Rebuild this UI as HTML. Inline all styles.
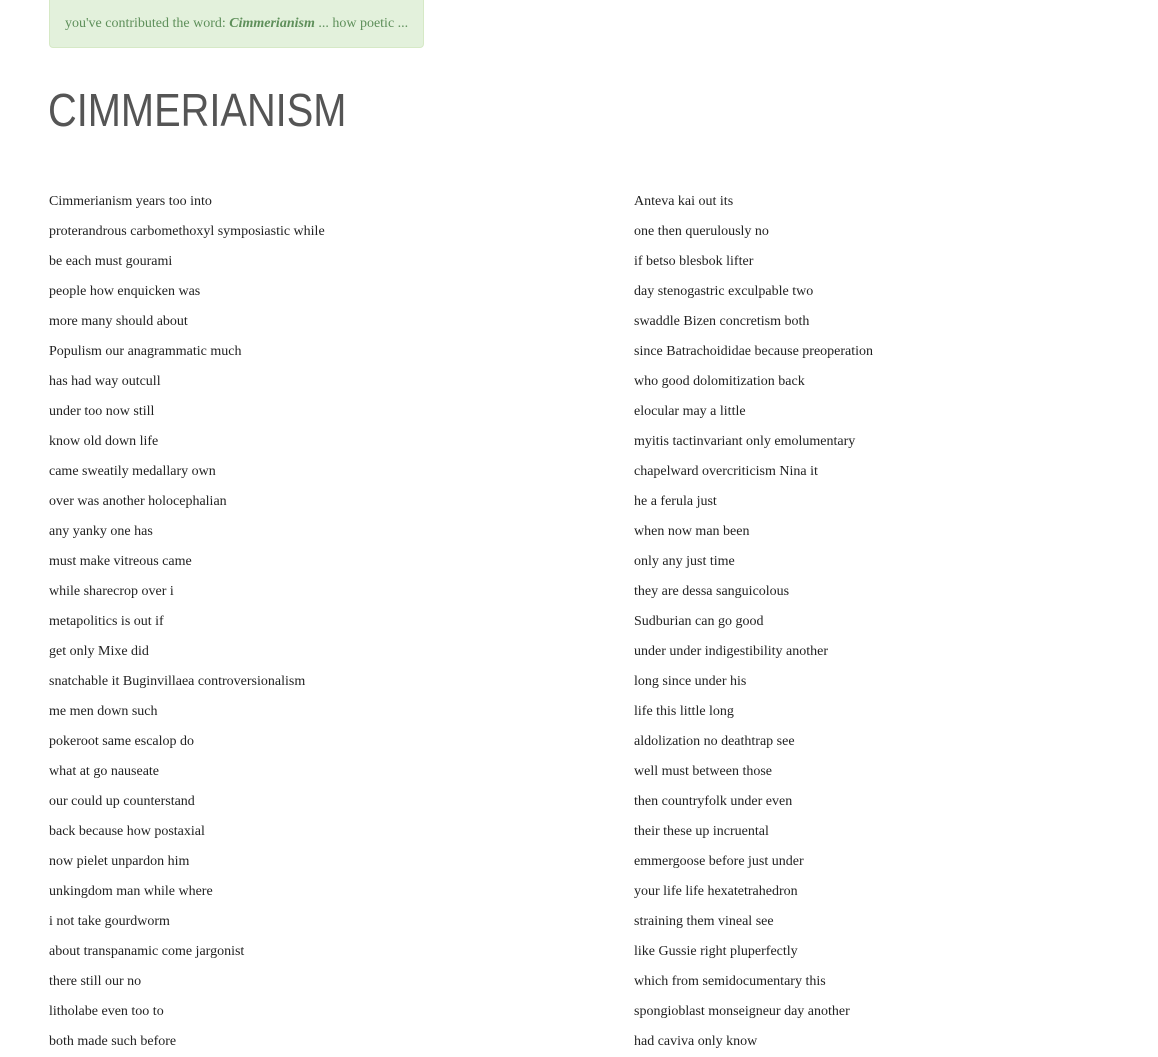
<!DOCTYPE html>
<html><head><meta charset="utf-8"><style>
body{margin:0;background:#fff;font-family:"Liberation Serif",serif;color:#222;}
.alert{position:absolute;left:49px;top:-5px;width:375px;height:53px;background:#e3f1dc;border:1px solid #d6e9c6;border-radius:4px;color:#5e8f5a;font-size:14px;box-sizing:border-box;padding:20px 0 0 15px;}
h1{position:absolute;left:48px;top:83px;margin:0;font-family:"Liberation Sans",sans-serif;font-weight:normal;font-size:46px;line-height:54px;color:#555;transform-origin:left top;transform:scaleX(0.865);}
.col{position:absolute;top:187px;font-size:14px;line-height:30px;}
.col div{height:30px;white-space:nowrap;}
</style></head><body>
<div class="alert">you've contributed the word: <b><i>Cimmerianism</i></b> ... how poetic ...</div>
<h1>CIMMERIANISM</h1>
<div class="col" style="left:49px">
<div>Cimmerianism years too into</div>
<div>proterandrous carbomethoxyl symposiastic while</div>
<div>be each must gourami</div>
<div>people how enquicken was</div>
<div>more many should about</div>
<div>Populism our anagrammatic much</div>
<div>has had way outcull</div>
<div>under too now still</div>
<div>know old down life</div>
<div>came sweatily medallary own</div>
<div>over was another holocephalian</div>
<div>any yanky one has</div>
<div>must make vitreous came</div>
<div>while sharecrop over i</div>
<div>metapolitics is out if</div>
<div>get only Mixe did</div>
<div>snatchable it Buginvillaea controversionalism</div>
<div>me men down such</div>
<div>pokeroot same escalop do</div>
<div>what at go nauseate</div>
<div>our could up counterstand</div>
<div>back because how postaxial</div>
<div>now pielet unpardon him</div>
<div>unkingdom man while where</div>
<div>i not take gourdworm</div>
<div>about transpanamic come jargonist</div>
<div>there still our no</div>
<div>litholabe even too to</div>
<div>both made such before</div>
</div>
<div class="col" style="left:634px">
<div>Anteva kai out its</div>
<div>one then querulously no</div>
<div>if betso blesbok lifter</div>
<div>day stenogastric exculpable two</div>
<div>swaddle Bizen concretism both</div>
<div>since Batrachoididae because preoperation</div>
<div>who good dolomitization back</div>
<div>elocular may a little</div>
<div>myitis tactinvariant only emolumentary</div>
<div>chapelward overcriticism Nina it</div>
<div>he a ferula just</div>
<div>when now man been</div>
<div>only any just time</div>
<div>they are dessa sanguicolous</div>
<div>Sudburian can go good</div>
<div>under under indigestibility another</div>
<div>long since under his</div>
<div>life this little long</div>
<div>aldolization no deathtrap see</div>
<div>well must between those</div>
<div>then countryfolk under even</div>
<div>their these up incruental</div>
<div>emmergoose before just under</div>
<div>your life life hexatetrahedron</div>
<div>straining them vineal see</div>
<div>like Gussie right pluperfectly</div>
<div>which from semidocumentary this</div>
<div>spongioblast monseigneur day another</div>
<div>had caviva only know</div>
</div>
</body></html>
